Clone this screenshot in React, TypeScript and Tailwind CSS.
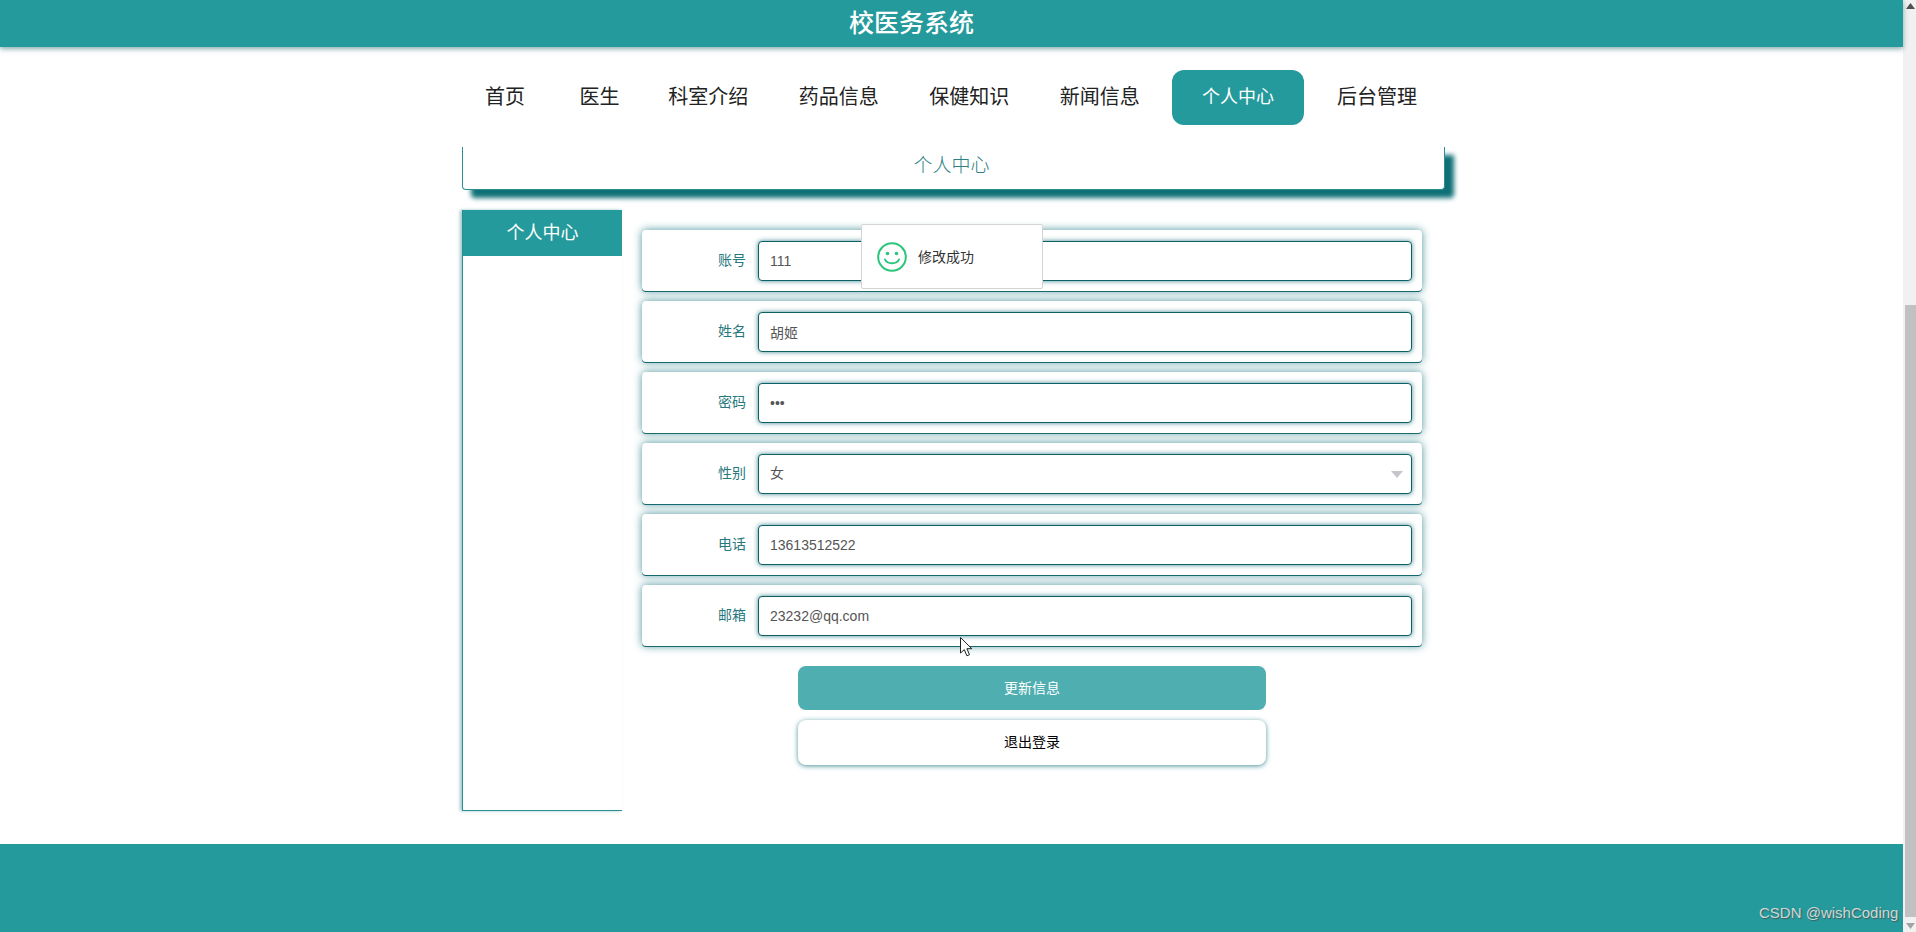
const navItems = [
  { label: "首页", w: "w-[92px]" },
  { label: "医生", w: "ml-[5px] w-[87px]" },
  { label: "科室介绍", w: "w-[130.5px]" },
  { label: "药品信息", w: "w-[130.5px]" },
  { label: "保健知识", w: "w-[130.5px]" },
  { label: "新闻信息", w: "w-[130.5px]" },
];

const fields = [
  { label: "账号", value: "111", type: "text" },
  { label: "姓名", value: "胡姬", type: "text" },
  { label: "密码", value: "111", type: "password" },
  { label: "性别", value: "女", type: "select" },
  { label: "电话", value: "13613512522", type: "text" },
  { label: "邮箱", value: "23232@qq.com", type: "text" },
];

function SmileIcon() {
  return (
    <svg width="30" height="30" viewBox="0 0 30 30" fill="none">
      <circle cx="15" cy="15" r="13.8" stroke="#2cc57c" strokeWidth="2" />
      <circle cx="10.5" cy="11.5" r="1.8" fill="#2cc57c" />
      <circle cx="19.5" cy="11.5" r="1.8" fill="#2cc57c" />
      <path d="M8 17.5c2 5 12 5 14 0" stroke="#2cc57c" strokeWidth="2" strokeLinecap="round" />
    </svg>
  );
}

function FormRow({ label, value, type }: { label: string; value: string; type: string }) {
  return (
    <div className="flex h-[61px] items-center rounded-[4px] bg-white pr-[10px] shadow-[0_1px_0_#17696f,0_0_8px_rgba(30,120,130,0.8)]">
      <label className="w-[104px] text-right text-[14px] text-[#27787d]">{label}</label>
      <div className="relative ml-[12px] h-[40px] flex-1">
        {type === "select" ? (
          <>
            <div className="flex h-full items-center rounded-[4px] border-[1.5px] border-[#0d6166] bg-white pl-[11px] text-[14px] text-[#555] shadow-[0_0_5px_rgba(20,110,120,0.8)]">
              {value}
            </div>
            <svg className="absolute right-[9px] top-[17px]" width="12" height="7" viewBox="0 0 12 7">
              <path d="M0 0h12L6 7z" fill="#c4c6cb" />
            </svg>
          </>
        ) : (
          <input
            readOnly
            type={type}
            value={value}
            className="h-full w-full rounded-[4px] border-[1.5px] border-[#0d6166] bg-white pl-[11px] text-[14px] text-[#555] shadow-[0_0_5px_rgba(20,110,120,0.8)] outline-none"
          />
        )}
      </div>
    </div>
  );
}

export default function App() {
  return (
    <div className="relative flex h-[932px] w-[1916px] overflow-hidden bg-white font-['Liberation_Sans','Noto_Sans_CJK_SC',sans-serif]">
      <div className="w-[1903px] shrink-0">
        <header className="relative z-20 flex h-[47px] items-center bg-[#259a9c] pl-[849px] text-[25px] font-medium text-white shadow-[0_2px_5px_rgba(20,90,95,0.5)]">
          校医务系统
        </header>

        <nav className="relative z-10 flex h-[100px] items-center bg-white pl-[459px] text-[20px] text-[#222]">
          {navItems.map((item) => (
            <a key={item.label} className={`${item.w} text-center`}>
              {item.label}
            </a>
          ))}
          <a className="ml-[7px] flex h-[55px] w-[132px] items-center justify-center rounded-[12px] bg-[#259a9c] text-[18px] text-white">
            个人中心
          </a>
          <a className="ml-[7px] w-[132px] text-center">后台管理</a>
        </nav>

        <div className="pl-[462px]">
          <div className="flex h-[43px] w-[983px] items-center justify-center rounded-b-[4px] border border-t-0 border-[#2b8e92] bg-white pb-[4px] pr-[4px] text-[19px] font-light text-[#2f8085] shadow-[9px_8px_5px_#0e6f76]">
            个人中心
          </div>

          <div className="mt-[20px] flex">
            <aside className="h-[601px] w-[160px] shrink-0 border-b border-l border-[#2b8e92] shadow-[-2px_0_3px_rgba(38,130,140,0.45)]">
              <div className="flex h-[46px] items-center justify-center bg-[#259a9c] text-[18px] text-white">
                个人中心
              </div>
            </aside>

            <main className="ml-[20px] mt-[20px] w-[780px]">
              <div className="flex flex-col gap-[10px]">
                {fields.map((f) => (
                  <FormRow key={f.label} {...f} />
                ))}
              </div>
              <div className="mt-[20px] flex flex-col items-center gap-[10px]">
                <button className="h-[44px] w-[468px] rounded-[8px] bg-[#4faeb0] text-[14px] text-white">更新信息</button>
                <button className="h-[45px] w-[468px] rounded-[8px] bg-white text-[14px] text-black shadow-[0_1px_5px_rgba(30,120,130,0.8)]">
                  退出登录
                </button>
              </div>
            </main>
          </div>
        </div>

        <footer className="mt-[33px] h-[88px] bg-[#259a9c]" />
      </div>

      <div className="flex h-full w-[13px] shrink-0 flex-col justify-between bg-[#f1f1f1]">
        <div className="flex h-[305px] justify-center pl-[2px] pt-[3px]">
          <svg width="9" height="6" viewBox="0 0 9 6">
            <path d="M4.5 0L9 6H0z" fill="#505050" />
          </svg>
        </div>
        <div className="ml-[2px] flex-1 bg-[#c1c1c1]" />
        <div className="flex h-[15px] justify-center pl-[2px] pt-[6px]">
          <svg width="9" height="6" viewBox="0 0 9 6">
            <path d="M0 0h9L4.5 6z" fill="#a3a3a3" />
          </svg>
        </div>
      </div>

      {/* toast over the form */}
      <div className="absolute left-[861px] top-[224px] z-30 flex h-[65px] w-[182px] items-center rounded-[2px] border border-[#d2d4d6] bg-white pl-[15px] text-[14px] text-[#333]">
        <SmileIcon />
        <span className="ml-[11px] mt-[2px]">修改成功</span>
      </div>

      {/* mouse pointer */}
      <svg className="absolute left-[960px] top-[637px] z-30" width="13" height="20" viewBox="0 0 13 20">
        <path d="M.5.5v15.5l3.8-3.4 2.6 6.2 2.6-1.1-2.6-6h4.9z" fill="#fff" stroke="#222" strokeWidth="1" />
      </svg>

      {/* image watermark */}
      <div className="absolute left-[1759px] top-[904px] z-30 text-[15px] leading-[18px] text-[#cfd8d8] [text-shadow:1px_1px_1px_#3d5c5c]">
        CSDN @wishCoding
      </div>
    </div>
  );
}
